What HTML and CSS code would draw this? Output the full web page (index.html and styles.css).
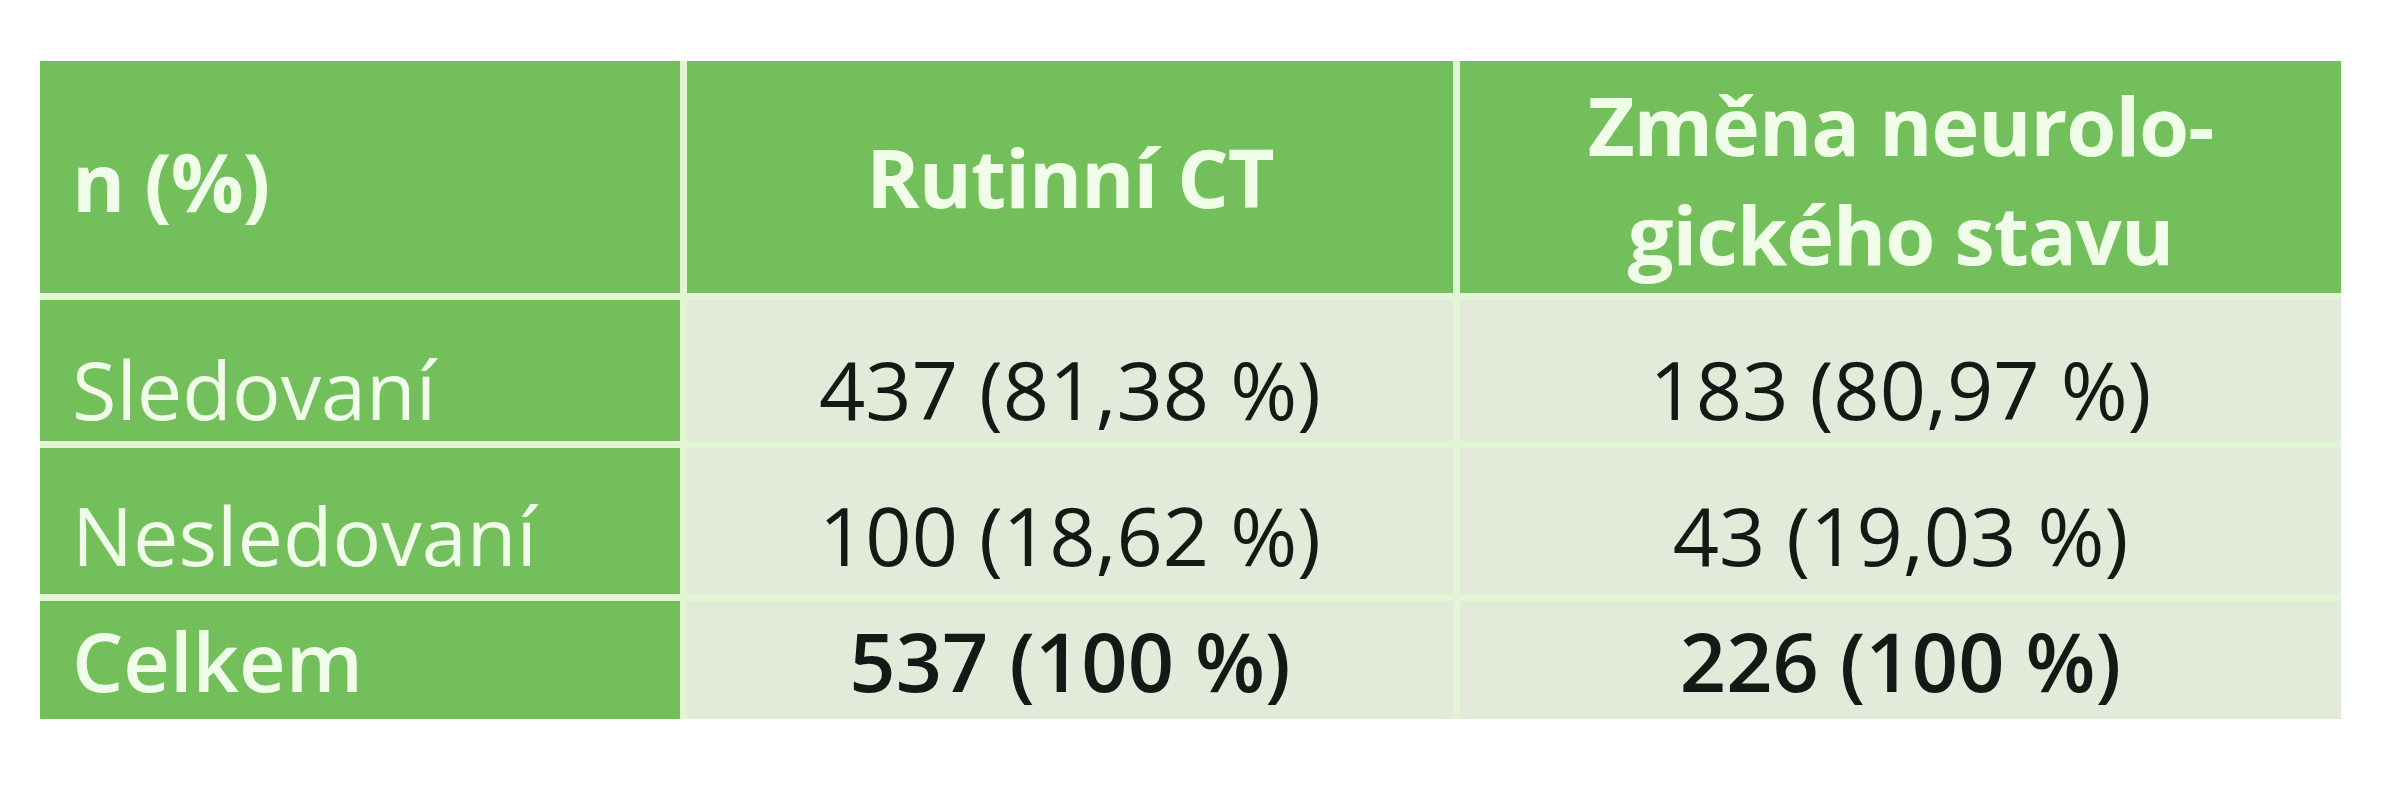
FILE: index.html
```html
<!DOCTYPE html>
<html lang="cs">
<head>
<meta charset="utf-8">
<title>Tabulka</title>
<link rel="stylesheet" href="styles.css">
</head>
<body>
<div class="page">
  <div class="grid">
    <div class="cell head left">n (%)</div>
    <div class="cell head">Rutinní CT</div>
    <div class="cell head two">Změna neurolo-<br>gického stavu</div>

    <div class="cell label r1">Sledovaní</div>
    <div class="cell data r1">437 (81,38 %)</div>
    <div class="cell data r1">183 (80,97 %)</div>

    <div class="cell label r2">Nesledovaní</div>
    <div class="cell data r2">100 (18,62 %)</div>
    <div class="cell data r2">43 (19,03 %)</div>

    <div class="cell label bold r3">Celkem</div>
    <div class="cell data bold r3">537 (100 %)</div>
    <div class="cell data bold r3">226 (100 %)</div>
  </div>
</div>
</body>
</html>
```

FILE: styles.css
```css
html, body {
  margin: 0;
  padding: 0;
  background: #ffffff;
}

.page {
  width: 2407px;
  height: 800px;
  padding: 61px 0 0 40px;
  box-sizing: border-box;
}

.grid {
  display: grid;
  grid-template-columns: 640px 766px 881px;
  grid-template-rows: 232px 141px 146px 118px;
  gap: 7px;
  width: 2301px;
  background: #e2f6d6;
  font-family: "Open Sans", "Noto Sans", sans-serif;
  font-size: 81px;
  font-weight: 500;
  line-height: 1.34;
}

.cell {
  display: flex;
  align-items: center;
  justify-content: center;
  box-sizing: border-box;
  text-align: center;
  white-space: nowrap;
}

.head {
  background: #72bf5c;
  color: #f0fde8;
  font-weight: 700;
  letter-spacing: -1px;
}

.head.left {
  justify-content: flex-start;
  padding-left: 32px;
  padding-top: 8px;
}

.head.two {
  padding-top: 6px;
}

.label {
  background: #72bf5c;
  color: #f0fde8;
  justify-content: flex-start;
  padding-left: 32px;
}

.data {
  background: #e2ebda;
  color: #161815;
}

.bold {
  font-weight: 650;
}

.r1 {
  padding-top: 38px;
}

.r2 {
  padding-top: 28px;
}

.r3 {
  padding-top: 2px;
}
```
